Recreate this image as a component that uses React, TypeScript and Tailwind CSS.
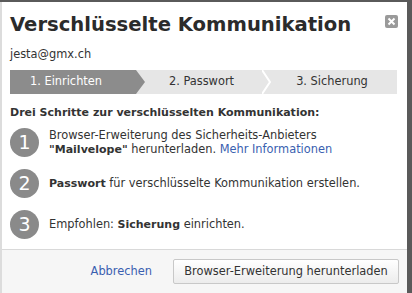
import React from "react";

const font = { fontFamily: '"DejaVu Sans", Verdana, sans-serif' };

function StepCircle({ n }: { n: number }) {
  return (
    <div className="w-[29px] h-[29px] shrink-0 rounded-full bg-[#8a8a8a] text-white flex items-center justify-center text-[19px] leading-none">
      {n}
    </div>
  );
}

export default function App() {
  return (
    <div className="w-[412px] h-[293px] bg-[#5a5a5a] pt-[2px] pr-[5px] overflow-hidden" style={font}>
      <div className="h-[291px] bg-white border-l-[2px] border-[#dcdcdc] flex flex-col text-[#333]">
        <div className="flex-1 pl-[8px] pr-[8px]">
          <div className="flex items-start justify-between pt-[11px]">
            <h1 className="text-[19.6px] font-bold leading-[24px] text-[#2b2b2b]">Verschlüsselte Kommunikation</h1>
            <button className="mt-[2px] mr-[1px] w-[13px] h-[13px] rounded-[2px] bg-[#9a9a9a] flex items-center justify-center" aria-label="Schliessen">
              <svg width="9" height="9" viewBox="0 0 9 9">
                <path d="M1.5 1.5 L7.5 7.5 M7.5 1.5 L1.5 7.5" stroke="white" strokeWidth="2" />
              </svg>
            </button>
          </div>
          <div className="text-[11.4px] mt-[10px] leading-[14px]">jesta@gmx.ch</div>
          <div className="mt-[9px] mr-[2px] h-[24px] flex text-[11.4px] bg-[#e6e6e6]">
            <div className="relative w-[126px] bg-[#8c8c8c] text-white flex items-center justify-center pr-[14px]">
              1. Einrichten
              <svg className="absolute right-[-9px] top-0" width="9" height="24" viewBox="0 0 9 24">
                <path d="M0 0 L9 12 L0 24 Z" fill="#8c8c8c" />
              </svg>
            </div>
            <div className="relative w-[131px] flex items-center justify-center text-[#333]">
              2. Passwort
              <svg className="absolute right-[-4px] top-0" width="9" height="24" viewBox="0 0 9 24">
                <path d="M0 0 L8 12 L0 24" stroke="white" strokeWidth="2" fill="none" />
              </svg>
            </div>
            <div className="flex-1 flex items-center justify-center text-[#333]">3. Sicherung</div>
          </div>
          <div className="mt-[11px] text-[11px] font-bold leading-[15px]">Drei Schritte zur verschlüsselten Kommunikation:</div>
          <div className="mt-[8px] flex flex-col gap-[12px]">
            <div className="flex items-center gap-[10px]">
              <StepCircle n={1} />
              <div className="text-[11.4px] leading-[14px]">
                Browser-Erweiterung des Sicherheits-Anbieters
                <br />
                <b className="text-[11px]">"Mailvelope"</b> herunterladen. <a className="text-[#3a5fb0]">Mehr Informationen</a>
              </div>
            </div>
            <div className="flex items-center gap-[10px]">
              <StepCircle n={2} />
              <div className="text-[11.4px] leading-[14px]">
                <b className="text-[11px]">Passwort</b> für verschlüsselte Kommunikation erstellen.
              </div>
            </div>
            <div className="flex items-center gap-[10px]">
              <StepCircle n={3} />
              <div className="text-[11.4px] leading-[14px]">
                Empfohlen: <b className="text-[11px]">Sicherung</b> einrichten.
              </div>
            </div>
          </div>
        </div>
        <div className="h-[44px] border-t border-[#d9d9d9] bg-[#f6f6f6] flex items-center justify-end pr-[8px] gap-[21px]">
          <a className="text-[11.4px] text-[#3a5fb0]">Abbrechen</a>
          <button className="h-[25px] w-[226px] text-[11.4px] text-[#333] border border-[#c8c8c8] rounded-[2px] bg-gradient-to-b from-white to-[#ececec]">
            Browser-Erweiterung herunterladen
          </button>
        </div>
      </div>
    </div>
  );
}
